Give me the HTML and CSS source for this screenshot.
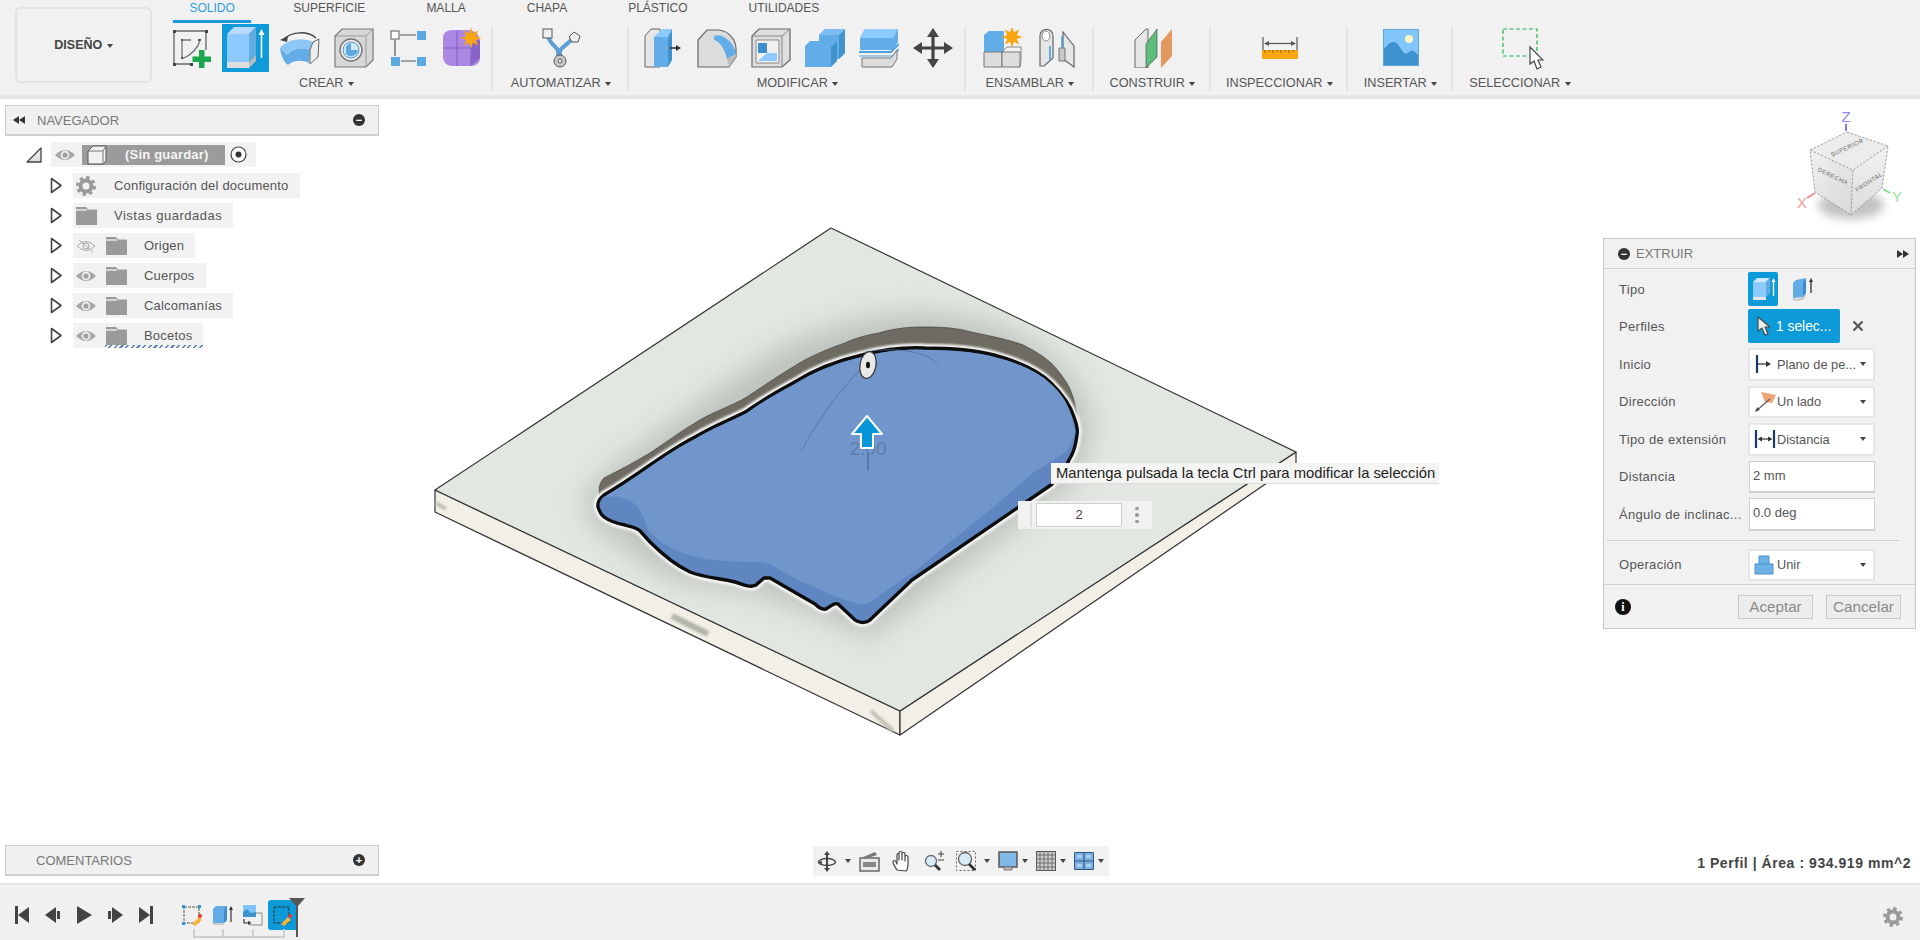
FILE: index.html
```html
<!DOCTYPE html>
<html lang="es">
<head>
<meta charset="utf-8">
<title>Diseño - Extruir</title>
<link rel="stylesheet" href="styles.css">
</head>
<body>
<svg class="defs" width="0" height="0" aria-hidden="true">
  <defs>
    <polygon id="star" fill="#f8a50f" points="0,-11 2,-5 7.8,-7.8 5,-2 11,0 5,2 7.8,7.8 2,5 0,11 -2,5 -7.8,7.8 -5,2 -11,0 -5,-2 -7.8,-7.8 -2,-5"/>
    <g id="eye"><path d="M0 7Q10-3 20 7Q10 17 0 7z" fill="#a6a6a6"/><circle cx="10" cy="7" r="4.4" fill="#eee"/><circle cx="10" cy="7" r="2.6" fill="#a0a0a0"/></g>
    <g id="folder"><path d="M0 1h10l2 2.6h9V19H0z" fill="#9a9a9a"/><path d="M0 4h11" stroke="#eee" stroke-width="1.4"/></g>
    <path id="tree-arrow" d="M1.500 1.500L11 8.500L1.500 15.500z" fill="#fff" stroke="#444" stroke-width="1.600" stroke-linejoin="round"/>
    <path id="blob" d="M598 507C597 501 600 498 604 495C640 474 665 452 695 437C715 425 730 420 747 411C765 398 780 390 793 383C815 369 840 360 862 355C885 349 905 347 925 348C950 348 975 350 994 355C1020 362 1040 372 1051 383C1063 395 1071 407 1074 417C1077 425 1078 430 1077 435C1075 450 1072 455 1069 460C1065 470 1058 478 1051 485L912 580L872 618C868 623 860 624 855 620L838 604C834 602 830 607 826 609C822 610 818 607 815 604L770 578L764 578L756 585C750 588 745 585 735 582C720 578 705 578 690 572C675 565 660 552 650 542L641 532C637 527 630 527 625 525C615 523 608 520 604 517C600 514 599 510 598 507z"/>
    <filter id="b1" x="-30%" y="-30%" width="160%" height="160%"><feGaussianBlur stdDeviation="1"/></filter>
    <filter id="b12" x="-30%" y="-30%" width="160%" height="160%"><feGaussianBlur stdDeviation="14"/></filter>
    <filter id="b3" x="-50%" y="-50%" width="200%" height="200%"><feGaussianBlur stdDeviation="5"/></filter>
    <linearGradient id="cubeL" x1="0" y1="0" x2="1" y2="1"><stop offset="0" stop-color="#f1f1f1"/><stop offset="1" stop-color="#d8d8d8"/></linearGradient>
    <linearGradient id="cubeR" x1="0" y1="0" x2="0" y2="1"><stop offset="0" stop-color="#f2f2f2"/><stop offset="1" stop-color="#dcdcdc"/></linearGradient>
  </defs>
</svg>

<header class="ribbon">
  <button class="design" type="button">DISEÑO <i class="caret"></i></button>
  <div class="ribbon-main">
    <nav class="tabs">
      <span class="tab active">SOLIDO</span>
      <span class="tab">SUPERFICIE</span>
      <span class="tab">MALLA</span>
      <span class="tab">CHAPA</span>
      <span class="tab">PLÁSTICO</span>
      <span class="tab">UTILIDADES</span>
    </nav>
    <div class="tools">
      <section class="group g-crear">
        <div class="btns">
          <span class="tool"><svg width="40" height="40" viewBox="0 0 40 40"><path d="M2 3h32M2 3v33M34 3v19M2 36h17" fill="none" stroke="#666" stroke-width="1.300"/><path d="M1 2h3v3H1zM33 2h3v3h-3zM1 35h3v3H1zM18 35h3v3h-3z" fill="#444"/><path d="M10 12v18M10 12h9M10 31C19 27 26 21 28 12" fill="none" stroke="#777" stroke-width="1.300"/><path d="M9 11h2v2H9zM26 11h3v2h-3zM9 29h2v2H9z" fill="#555"/><path d="M27 22h5.500v6.500H39V34h-6.500v6H27v-6h-6.500v-5.500H27z" fill="#1aa64b"/></svg></span>
          <span class="tool"><span class="tool-sel"><svg width="47" height="48" viewBox="0 0 47 48"><path d="M5 10l7-7h22l-7 7z" fill="#b7dcff"/><path d="M5 10h22v28H5z" fill="#8ccaff"/><path d="M27 10l7-7v28l-7 7z" fill="#62addf"/><path d="M5 38h22v6H5z" fill="#ddd"/><path d="M27 38l7-7v6l-7 7z" fill="#b9b9b9"/><path d="M39.500 34V9" stroke="#fff" stroke-width="1.600"/><path d="M36.500 11l3-6 3 6z" fill="#fff"/></svg></span></span>
          <span class="tool"><svg width="42" height="36" viewBox="0 0 42 36"><path d="M5 9C13 1 29 1 37 8" fill="none" stroke="#444" stroke-width="1.500"/><path d="M1 10l8-4-1 6z" fill="#444"/><path d="M1 18C8 9 24 7 34 12L31 20C23 17 13 19 8 25z" fill="#8cc7f5"/><path d="M1 18L8 25C13 19 23 17 31 20L30 33C22 29 13 31 9 35C5 32 2 26 1 18z" fill="#62ade8"/><path d="M31 20L34 12L40 9L39 27L31 34z" fill="#eee" stroke="#666"/></svg></span>
          <span class="tool"><svg width="40" height="40" viewBox="0 0 40 40"><path d="M1 8l7-7h31v31l-7 7H1z" fill="#d8d8d8" stroke="#777" stroke-width="1.200"/><path d="M1 8h31v31M32 8l7-7" fill="none" stroke="#999"/><circle cx="17" cy="22" r="11" fill="#eee" stroke="#777" stroke-width="1.400"/><circle cx="17" cy="22" r="8" fill="#cfe6f7" stroke="#5b93c4"/><path d="M12 19a7 7 0 0 1 5-4v7h7a7 7 0 0 1-12 4z" fill="#5ca8df"/></svg></span>
          <span class="tool"><svg width="36" height="36" viewBox="0 0 36 36"><rect x="1" y="1" width="8" height="8" fill="#fff" stroke="#555"/><path d="M27 1h9v9h-9zM1 27h9v9H1zM27 27h9v9h-9z" fill="#5ba8e3"/><path d="M10 5h16M5 10v16M11 31h15" stroke="#555" stroke-width="1.200"/></svg></span>
          <span class="tool"><svg width="40" height="40" viewBox="0 0 40 40"><path d="M1 10C1 5 5 2 10 2h16c7 0 12 5 12 12v16c0 5-4 8-9 8H10c-5 0-9-4-9-9z" fill="#ac88e4"/><path d="M1 20h28M15 3v35M29 12v26" stroke="#8560c8" stroke-width="1.100" fill="none"/><path d="M29 14l9-2v18l-9 8z" fill="#8a63c9"/><use href="#star" transform="translate(29 10) scale(.95)"/></svg></span>
        </div>
        <div class="glabel">CREAR <i class="caret"></i></div>
      </section>
      <section class="group g-auto">
        <div class="btns">
          <span class="tool"><svg width="42" height="40" viewBox="0 0 42 40"><path d="M8 8C10 16 16 18 19 24c3-6 10-8 15-15" fill="none" stroke="#5b9fd4" stroke-width="4"/><path d="M19 30V22" stroke="#5b9fd4" stroke-width="6"/><rect x="3" y="1" width="9" height="9" fill="#eee" stroke="#555"/><path d="M34 4l6 4-2 6h-6l-3-5z" fill="#eee" stroke="#555"/><circle cx="20" cy="33" r="6" fill="#c8c8c8" stroke="#555"/><circle cx="20" cy="33" r="2" fill="#eee" stroke="#555"/></svg></span>
        </div>
        <div class="glabel">AUTOMATIZAR <i class="caret"></i></div>
      </section>
      <section class="group g-mod">
        <div class="btns">
          <span class="tool"><svg width="38" height="40" viewBox="0 0 38 40"><path d="M1 8l6-7h9v38H1z" fill="#e6e6e6" stroke="#666"/><path d="M10 9h14v30H10z" fill="#62ade8"/><path d="M10 9l8-8h10l-4 8z" fill="#8ccaff"/><path d="M24 9l4-8v31l-4 7z" fill="#4193cd"/><path d="M26 20h7" stroke="#333" stroke-width="1.600"/><path d="M32 17l5 3-5 3z" fill="#333"/></svg></span>
          <span class="tool"><svg width="40" height="40" viewBox="0 0 40 40"><path d="M1 39V12L10 2h12c9 1 17 9 17 19v8l-7 10z" fill="#dcdcdc" stroke="#666" stroke-width="1.200"/><path d="M17 8c7-3 20 5 22 18l-9 5C28 22 24 14 17 12z" fill="#62ade8"/><path d="M30 31l9-5v3l-7 10z" fill="#bcbcbc"/></svg></span>
          <span class="tool"><svg width="40" height="40" viewBox="0 0 40 40"><path d="M1 8l7-7h31v31l-8 7H1z" fill="#dedede" stroke="#666" stroke-width="1.200"/><path d="M1 8h30v31M31 8l8-7" stroke="#888" fill="none"/><path d="M5 12h23v23H5z" fill="#f0f0f0" stroke="#888"/><path d="M7 15h9v10H7z" fill="#3e8fc9"/><path d="M16 25h10v8H7z" fill="#8ccaff"/></svg></span>
          <span class="tool"><svg width="40" height="40" viewBox="0 0 40 40"><path d="M14 7l6-6h20v24l-6 6h-8v8H0V18l5-5h9z" fill="#62ade8"/><path d="M34 7v24l6-6V1zM26 19v20l6-6V13z" fill="#4193cd"/><path d="M14 7l6-6h20l-6 6z" fill="#7dbdf2"/></svg></span>
          <span class="tool"><svg width="40" height="40" viewBox="0 0 40 40"><path d="M1 10l5-9h33v13l-5 8H1z" fill="#62ade8"/><path d="M1 10L6 1h33l-5 9z" fill="#8ccaff"/><path d="M0 24h32l8-8" fill="none" stroke="#4ca2e0" stroke-width="1.800"/><path d="M0 28h34l6-7" fill="none" stroke="#4ca2e0" stroke-width="1.200"/><path d="M3 30v9h30l5-8V22l-6 8z" fill="#dcdcdc" stroke="#777"/></svg></span>
          <span class="tool"><svg width="40" height="40" viewBox="0 0 40 40"><path d="M20 4v32M4 20h32" stroke="#444" stroke-width="3.200"/><path d="M20 0l6 9H14zM20 40l-6-9h12zM0 20l9-6v12zM40 20l-9 6V14z" fill="#444"/></svg></span>
        </div>
        <div class="glabel">MODIFICAR <i class="caret"></i></div>
      </section>
      <section class="group g-ens">
        <div class="btns">
          <span class="tool"><svg width="40" height="40" viewBox="0 0 40 40"><path d="M1 7l5-4h15v21H1z" fill="#62ade8"/><path d="M1 24h18v15H1z" fill="#ddd" stroke="#777"/><path d="M19 24h18v15H19z" fill="#ddd" stroke="#777"/><path d="M19 24l5-5h14v14l-1 6" fill="none" stroke="#888"/><use href="#star" transform="translate(29 9) scale(.95)"/></svg></span>
          <span class="tool"><svg width="36" height="40" viewBox="0 0 36 40"><path d="M1 8c0-9 13-9 13 0v22l-9 8H1z" fill="#e6e6e6" stroke="#666" stroke-width="1.200"/><path d="M24 4l11 14v21l-11-8z" fill="#e6e6e6" stroke="#666" stroke-width="1.200"/><ellipse cx="7" cy="8" rx="4" ry="5" fill="#fff" stroke="#888"/><path d="M20 20h6v13h-6z" fill="#c8c8c8" stroke="#777"/><path d="M11 18v15M23 8v12" stroke="#45a0e0" stroke-width="1.600"/></svg></span>
        </div>
        <div class="glabel">ENSAMBLAR <i class="caret"></i></div>
      </section>
      <section class="group g-con">
        <div class="btns">
          <span class="tool"><svg width="38" height="40" viewBox="0 0 38 40"><path d="M1 12L12 1h2v39H1z" fill="#e6e6e6" stroke="#666"/><path d="M12 40V16L23 1v28z" fill="#5dbd7b" stroke="#444" stroke-width=".6"/><path d="M27 40V14L38 1v27z" fill="#e3985f"/></svg></span>
        </div>
        <div class="glabel">CONSTRUIR <i class="caret"></i></div>
      </section>
      <section class="group g-ins">
        <div class="btns">
          <span class="tool"><svg width="36" height="22" viewBox="0 0 36 22"><path d="M1 0v13M35 0v13" stroke="#555" stroke-width="1.200"/><path d="M4 6.500h28" stroke="#555" stroke-width="1.200"/><path d="M2 6.500L7 4v5zM34 6.500L29 4v5z" fill="#555"/><path d="M0 13h36v9H0z" fill="#f7a70f"/><path d="M3 13v3M7 13v2M11 13v3M15 13v2M19 13v3M23 13v2M27 13v3M31 13v2" stroke="#8a5a00"/></svg></span>
        </div>
        <div class="glabel">INSPECCIONAR <i class="caret"></i></div>
      </section>
      <section class="group g-ima">
        <div class="btns">
          <span class="tool"><svg width="36" height="38" viewBox="0 0 36 38"><rect width="36" height="37" fill="#82c5fb"/><circle cx="26" cy="10" r="4" fill="#fdf7c4"/><path d="M0 37V21c3-3 6-8 10-8s7 5 10 10c2 2 4 2 6 0s4-2 6 0l4 4v10z" fill="#3e93cf"/><rect x=".5" y=".5" width="35" height="36" fill="none" stroke="#5aa7de"/></svg></span>
        </div>
        <div class="glabel">INSERTAR <i class="caret"></i></div>
      </section>
      <section class="group g-sel">
        <div class="btns">
          <span class="tool tool-high"><svg width="42" height="42" viewBox="0 0 42 42"><rect x="1" y="1" width="34" height="27" fill="none" stroke="#1fb455" stroke-width="1.200" stroke-dasharray="4 2.500"/><path d="M28 19v17l4-3 3 8 4-2-3-7h5z" fill="#fff" stroke="#444" stroke-width="1.200"/></svg></span>
        </div>
        <div class="glabel">SELECCIONAR <i class="caret"></i></div>
      </section>
    </div>
  </div>
</header>

<main class="viewport">
  <svg class="scene" width="1920" height="784" viewBox="0 99 1920 784">
    <defs><clipPath id="plateClip"><path d="M831 228L435 492L900 711L1296 452z"/></clipPath></defs>
    <path d="M435 490v22L900 735V711z" fill="#f1efe6" stroke="#333" stroke-width="1.200" stroke-linejoin="round"/>
    <path d="M900 711v24L1296 463V452z" fill="#f1efe6" stroke="#333" stroke-width="1.200" stroke-linejoin="round"/>
    <path d="M831 228L435 490L900 711L1296 452z" fill="#e3e7e2" stroke="#333" stroke-width="1.200" stroke-linejoin="round"/>
    <path d="M672 616L708 634" stroke="#b4b4aa" stroke-width="6" filter="url(#b1)"/>
    <path d="M436 503l10 6M871 711l22 20" stroke="#c0c0b6" stroke-width="4" filter="url(#b1)"/>
    <g clip-path="url(#plateClip)"><path d="M599 498C640 460 700 420 747 386C790 352 860 326 925 327C1000 330 1060 365 1077 417C1080 450 1060 480 1051 483L868 622L830 605L764 580L678 567L604 517z" fill="#a9aea8" stroke="#a9aea8" stroke-width="26" opacity=".65" filter="url(#b12)"/></g>

    <path d="M600 497C598 488 600 482 604 478C620 470 635 462 650 453C665 443 680 432 695 423C712 412 730 407 747 397C762 387 778 376 793 367C810 356 828 349 845 343C858 337 868 335 879 333C895 328 910 327 925 327C942 327 957 328 971 332C990 336 1010 340 1023 345C1035 351 1043 356 1051 363C1058 370 1064 378 1069 387C1074 398 1076 408 1077 417L1077 435L1000 400L800 400L620 500z" fill="#6e6b62" stroke="#4a4842" stroke-width=".8"/>
    <use href="#blob" fill="none" stroke="#f7f7f5" stroke-width="8.500" stroke-linejoin="round" filter="url(#b1)"/>
    <use href="#blob" fill="#5f86c0" stroke="#0d0d0d" stroke-width="3.400" stroke-linejoin="round"/>
    <path d="M600 500C605 496 615 495 628 500C641 505 644 520 648 530C660 545 680 553 700 558C720 562 745 562 764 562C775 565 790 578 810 585C825 592 845 602 862 604C872 604 878 596 890 588C910 575 930 560 950 542C965 530 975 522 990 510C1005 497 1020 484 1033 473C1045 465 1058 458 1067 450C1071 444 1074 438 1075.500 432C1071 407 1063 395 1051 384C1040 373 1020 363 994 357C975 352 950 350 925 350C905 349 885 351 862 357C840 362 815 371 793 385C780 392 765 400 747 413C730 422 715 427 695 439C665 454 640 476 604 497z" fill="#7096cb"/>
    <path d="M862 368C835 395 815 425 802 450M865 352C885 348 920 348 937 363" fill="none" stroke="#4a6a9a" stroke-width=".9" opacity=".8"/>
    <ellipse cx="868" cy="365" rx="8" ry="13.500" transform="rotate(10 868 365)" fill="#e8e8e4" stroke="#333" stroke-width="1.200"/>
    <ellipse cx="868" cy="365" rx="2" ry="3.200" fill="#111"/>
    <text x="868" y="455" class="scene-dim">2.00</text>
    <path d="M868 453v18" stroke="#4a6a9a" stroke-width="1.200"/>
    <path d="M867 416L882 434H873V448H861V434H852z" fill="#0696d7" stroke="#fff" stroke-width="2" stroke-linejoin="round"/>

    <g class="viewcube">
      <ellipse cx="1851" cy="205" rx="33" ry="14" fill="#9a9a9a" opacity=".6" filter="url(#b3)"/>
      <path d="M1847 132L1888 146L1853 170L1810 150z" fill="#ececec"/>
      <path d="M1810 150L1853 170L1851 215L1815 192z" fill="url(#cubeL)"/>
      <path d="M1853 170L1888 146L1882 188L1851 215z" fill="url(#cubeR)"/>
      <path d="M1847 132L1888 146L1882 188L1851 215L1815 192L1810 150zM1810 150L1853 170L1888 146M1853 170L1851 215" fill="none" stroke="#8a8a8a" stroke-width=".8" stroke-dasharray="2.500 1.500"/>
      <text class="cube-label" transform="translate(1832 157) rotate(-25)">SUPERIOR</text>
      <text class="cube-label" transform="translate(1817 171) rotate(25)">DERECHA</text>
      <text class="cube-label" transform="translate(1857 192) rotate(-33)">FRONTAL</text>
      <path d="M1846 131v-7" stroke="#7c7cf5" stroke-width="2"/>
      <text class="axis axis-z" x="1846" y="122">Z</text>
      <path d="M1815 193l-8 5" stroke="#f08a8a" stroke-width="2"/>
      <text class="axis axis-x" x="1802" y="208">X</text>
      <path d="M1883 189l7 4" stroke="#86e08c" stroke-width="2"/>
      <text class="axis axis-y" x="1897" y="202">Y</text>
    </g>
  </svg>

  <aside class="navigator">
    <div class="side-head">
      <svg class="rewind" width="12" height="8" viewBox="0 0 12 8"><path d="M6 0v8L0 4zM12 0v8L6 4z" fill="#333"/></svg>
      <span class="side-title">NAVEGADOR</span>
      <span class="round-btn">−</span>
    </div>
    <ul class="tree">
      <li class="tree-root">
        <svg width="16" height="16" viewBox="0 0 16 16"><path d="M15 1v14H1z" fill="url(#cubeR)" stroke="#444" stroke-width="1.300" stroke-linejoin="round"/></svg>
        <div class="node node-root">
          <svg width="20" height="14" viewBox="0 0 20 14"><use href="#eye"/></svg>
          <div class="root-bar">
            <svg width="20" height="20" viewBox="0 0 20 20"><path d="M1 6l5-5h13v15l-3 3H1z" fill="#f2f2f2" stroke="#555"/><path d="M1 6h15v13M16 6l3-5" fill="none" stroke="#777"/></svg>
            <span class="root-name">(Sin guardar)</span>
          </div>
          <svg width="17" height="17" viewBox="0 0 17 17"><circle cx="8.500" cy="8.500" r="7.500" fill="#fff" stroke="#444" stroke-width="1.200"/><circle cx="8.500" cy="8.500" r="3" fill="#333"/></svg>
        </div>
      </li>
      <li class="tree-row">
        <svg class="tw" width="13" height="17"><use href="#tree-arrow"/></svg>
        <div class="node n-wide">
          <svg class="ic-gear" width="20" height="20" viewBox="0 0 20 20"><circle cx="10" cy="10" r="5.500" fill="none" stroke="#9a9a9a" stroke-width="4"/><circle cx="10" cy="10" r="8.500" fill="none" stroke="#9a9a9a" stroke-width="3" stroke-dasharray="3.400 3.270"/></svg>
          <span class="node-text">Configuración del documento</span>
        </div>
      </li>
      <li class="tree-row">
        <svg class="tw" width="13" height="17"><use href="#tree-arrow"/></svg>
        <div class="node">
          <svg class="ic-folder-only" width="21" height="19" viewBox="0 0 21 19"><use href="#folder"/></svg>
          <span class="node-text text-wide">Vistas guardadas</span>
        </div>
      </li>
      <li class="tree-row">
        <svg class="tw" width="13" height="17"><use href="#tree-arrow"/></svg>
        <div class="node">
          <svg class="ic-eye" width="20" height="14" viewBox="0 0 20 14"><path d="M1 7Q10-2 19 7Q10 16 1 7z" fill="#f0f0f0" stroke="#aaa"/><circle cx="10" cy="7" r="3" fill="none" stroke="#aaa"/><path d="M3 1l14 12" stroke="#aaa"/></svg>
          <svg class="ic-folder" width="21" height="19" viewBox="0 0 21 19"><use href="#folder"/></svg>
          <span class="node-text">Origen</span>
        </div>
      </li>
      <li class="tree-row">
        <svg class="tw" width="13" height="17"><use href="#tree-arrow"/></svg>
        <div class="node">
          <svg class="ic-eye" width="20" height="14" viewBox="0 0 20 14"><use href="#eye"/></svg>
          <svg class="ic-folder" width="21" height="19" viewBox="0 0 21 19"><use href="#folder"/></svg>
          <span class="node-text">Cuerpos</span>
        </div>
      </li>
      <li class="tree-row">
        <svg class="tw" width="13" height="17"><use href="#tree-arrow"/></svg>
        <div class="node">
          <svg class="ic-eye" width="20" height="14" viewBox="0 0 20 14"><use href="#eye"/></svg>
          <svg class="ic-folder" width="21" height="19" viewBox="0 0 21 19"><use href="#folder"/></svg>
          <span class="node-text">Calcomanías</span>
        </div>
      </li>
      <li class="tree-row">
        <svg class="tw" width="13" height="17"><use href="#tree-arrow"/></svg>
        <div class="node node-wavy">
          <svg class="ic-eye" width="20" height="14" viewBox="0 0 20 14"><use href="#eye"/></svg>
          <svg class="ic-folder" width="21" height="19" viewBox="0 0 21 19"><use href="#folder"/></svg>
          <span class="node-text">Bocetos</span>
        </div>
      </li>
    </ul>
  </aside>

  <aside class="comments">
    <div class="side-head side-head-plain">
      <span class="side-title">COMENTARIOS</span>
      <span class="round-btn">+</span>
    </div>
  </aside>

  <div class="tooltip">Mantenga pulsada la tecla Ctrl para modificar la selección</div>

  <div class="value-box">
    <span class="grip"></span>
    <span class="value-input">2</span>
    <span class="kebab"><i></i><i></i><i></i></span>
  </div>

  <section class="extrude">
    <div class="ext-head">
      <span class="round-btn">−</span>
      <span class="side-title">EXTRUIR</span>
      <svg class="ffwd" width="12" height="8" viewBox="0 0 12 8"><path d="M0 0v8l6-4zM6 0v8l6-4z" fill="#333"/></svg>
    </div>
    <div class="ext-body">
      <div class="ext-row ext-row-tipo">
        <span class="ext-label">Tipo</span>
        <div class="type-btns">
          <span class="type-btn on"><svg width="26" height="28" viewBox="0 0 26 28"><path d="M3 7l4-4h13l-4 4z" fill="#cfe9ff"/><path d="M3 7h13v15H3z" fill="#8ccaff"/><path d="M16 7l4-4v15l-4 4z" fill="#62addf"/><path d="M3 22h13v3H3z" fill="#e6e6e6"/><path d="M23.500 21V6" stroke="#fff" stroke-width="1.400"/><path d="M21.500 7l2-4 2 4z" fill="#fff"/></svg></span>
          <span class="type-btn"><svg width="22" height="24" viewBox="0 0 22 24"><path d="M1 6l3-3 10-2v15l-3 4-10 1z" fill="#62ade8"/><path d="M11 5l3-4v15l-3 4z" fill="#3e8fc9"/><path d="M1 21l4 1 6-2 3-4-1 5-3 2-5 1-4-1z" fill="#c8c8c8"/><path d="M19 16V3" stroke="#333" stroke-width="1.300"/><path d="M17 5l2-4 2 4z" fill="#333"/></svg></span>
        </div>
      </div>
      <div class="ext-row ext-row-perf">
        <span class="ext-label">Perfiles</span>
        <div class="select-btn">
          <svg width="14" height="22" viewBox="0 0 14 22"><path d="M2 2v14l4-3 3 7 3-1-3-7h5z" fill="#eee" stroke="#444" stroke-width="1.100"/></svg>
          <span>1 selec...</span>
        </div>
        <svg class="clear" width="12" height="12" viewBox="0 0 12 12"><path d="M1.500 1.500l9 9M10.500 1.500l-9 9" stroke="#555" stroke-width="2.200"/></svg>
      </div>
      <div class="ext-row">
        <span class="ext-label">Inicio</span>
        <div class="dropdown">
          <span class="dd-ic"><svg width="20" height="20" viewBox="0 0 20 20"><path d="M3 1v18" stroke="#183a68" stroke-width="2.200"/><path d="M4 10h9" stroke="#333" stroke-width="1.300"/><path d="M12 7l5 3-5 3z" fill="#333"/></svg></span>
          <span class="dd-text">Plano de pe...</span><i class="caret"></i>
        </div>
      </div>
      <div class="ext-row">
        <span class="ext-label">Dirección</span>
        <div class="dropdown">
          <span class="dd-ic"><svg width="22" height="22" viewBox="0 0 22 22"><path d="M7 1l15 3-4 8-7-1z" fill="#eea677"/><path d="M2 20L16 8" stroke="#666" stroke-width="1.400"/><path d="M1 21l2-5 3 3z" fill="#555"/></svg></span>
          <span class="dd-text">Un lado</span><i class="caret"></i>
        </div>
      </div>
      <div class="ext-row">
        <span class="ext-label">Tipo de extensión</span>
        <div class="dropdown">
          <span class="dd-ic"><svg width="22" height="20" viewBox="0 0 22 20"><path d="M2 1v18M20 1v18" stroke="#183a68" stroke-width="2.200"/><path d="M5 10h12" stroke="#333" stroke-width="1.200"/><path d="M3.500 10L8 7.500v5zM18.500 10L14 7.500v5z" fill="#333"/></svg></span>
          <span class="dd-text">Distancia</span><i class="caret"></i>
        </div>
      </div>
      <div class="ext-row">
        <span class="ext-label">Distancia</span>
        <div class="field">2 mm</div>
      </div>
      <div class="ext-row">
        <span class="ext-label">Ángulo de inclinac...</span>
        <div class="field">0.0 deg</div>
      </div>
      <hr class="ext-rule">
      <div class="ext-row ext-row-last">
        <span class="ext-label">Operación</span>
        <div class="dropdown">
          <span class="dd-ic"><svg width="20" height="20" viewBox="0 0 20 20"><path d="M5 1h10v9H5z" fill="#6cb1e6" stroke="#4b92c9"/><path d="M1 9h18v10H1z" fill="#6cb1e6" stroke="#4b92c9"/></svg></span>
          <span class="dd-text">Unir</span><i class="caret"></i>
        </div>
      </div>
    </div>
    <div class="ext-foot">
      <span class="info">i</span>
      <span class="btn btn-ok">Aceptar</span>
      <span class="btn">Cancelar</span>
    </div>
  </section>

  <div class="navbar">
    <span class="nb nb-gap"><svg width="20" height="22" viewBox="0 0 20 22"><path d="M10 1l3 4h-2v13h2l-3 4-3-4h2V5H7z" fill="#444"/><ellipse cx="10" cy="12" rx="8.500" ry="3.500" fill="none" stroke="#444" stroke-width="1.400"/><path d="M1 12l4-1v3z" fill="#444"/></svg><i class="caret"></i></span>
    <span class="nb"><svg width="21" height="21" viewBox="0 0 21 21"><rect x="1" y="7" width="19" height="13" fill="#e8e8e8" stroke="#555" stroke-width="1.300"/><rect x="4" y="11" width="13" height="5" fill="#888"/><path d="M2 7L16 1l2 3L9 7" fill="#777"/></svg></span>
    <span class="nb nb-solo"><svg width="20" height="22" viewBox="0 0 20 22"><path d="M5 20c-2-3-4-6-4-8s2-2 3 0l1 2V5c0-2 2-2 2 0v5V3c0-2 3-2 3 0v7V4c0-2 3-2 3 0v7V7c0-2 3-2 3 0v7c0 3-1 6-2 7z" fill="#fff" stroke="#444" stroke-width="1.200" stroke-linejoin="round"/></svg></span>
    <span class="nb nb-solo"><svg width="20" height="20" viewBox="0 0 20 20"><circle cx="7" cy="10" r="5.500" fill="#d8ecf7" stroke="#666" stroke-width="1.300"/><path d="M11 14l5 5" stroke="#333" stroke-width="2.800"/><path d="M14 3h6M17 0v6M14 9h6" stroke="#444" stroke-width="1.100"/></svg></span>
    <span class="nb nb-gap nb-solo"><svg width="20" height="20" viewBox="0 0 20 20"><rect x=".5" y=".5" width="19" height="19" fill="none" stroke="#666" stroke-dasharray="2 2"/><circle cx="9" cy="8" r="6.500" fill="#d8ecf7" stroke="#666" stroke-width="1.300"/><path d="M13 13l6 6" stroke="#333" stroke-width="2.800"/></svg><i class="caret"></i></span>
    <span class="nb"><svg width="20" height="21" viewBox="0 0 20 21"><rect x="1" y="1" width="18" height="15" fill="#82b8e8" stroke="#555" stroke-width="1.500"/><path d="M6 16h8v3H6z" fill="#bbb" stroke="#777"/></svg><i class="caret"></i></span>
    <span class="nb"><svg width="20" height="20" viewBox="0 0 20 20"><rect x=".5" y=".5" width="19" height="19" fill="#ccc" stroke="#555"/><path d="M4 0v20M8 0v20M12 0v20M16 0v20M0 4h20M0 8h20M0 12h20M0 16h20" stroke="#666" stroke-width=".9"/></svg><i class="caret"></i></span>
    <span class="nb"><svg width="20" height="18" viewBox="0 0 20 18"><path d="M.5.500h19v17H.5z" fill="#7bb0e2" stroke="#34557f"/><path d="M10 0v18M0 9h20" stroke="#34557f"/><path d="M3 3h5v3H3zM12 3h5v3h-5zM3 12h5v3H3zM12 12h5v3h-5z" fill="#a9cff0"/></svg><i class="caret"></i></span>
  </div>

  <div class="status">1 Perfil | Área : 934.919 mm^2</div>
</main>

<footer class="timeline">
  <div class="transport">
    <span class="tp"><svg width="16" height="18" viewBox="0 0 16 18"><path d="M2 0h3v18H2zM16 1v16L5 9z" fill="#444"/></svg></span>
    <span class="tp"><svg width="17" height="18" viewBox="0 0 17 18"><path d="M12 1v16L1 9zM13 5h3v8h-3z" fill="#444"/></svg></span>
    <span class="tp"><svg width="16" height="20" viewBox="0 0 16 20"><path d="M1 1v18l15-9z" fill="#444"/></svg></span>
    <span class="tp"><svg width="17" height="18" viewBox="0 0 17 18"><path d="M5 1v16l11-8zM1 5h3v8H1z" fill="#444"/></svg></span>
    <span class="tp"><svg width="16" height="18" viewBox="0 0 16 18"><path d="M0 1v16l11-8zM11 0h3v18h-3z" fill="#444"/></svg></span>
  </div>
  <div class="features">
    <span class="ft"><svg width="21" height="21" viewBox="0 0 21 21"><rect x="2" y="2" width="15" height="16" fill="none" stroke="#555" stroke-dasharray="3 1"/><path d="M0 0h3v3H0zM16 0h3v3h-3zM0 17h3v3H0z" fill="#2d97e0"/><path d="M10 19l7-7 3 3-7 6z" fill="#f5b63a"/><circle cx="18" cy="11" r="2" fill="#e33"/></svg></span>
    <span class="ft"><svg width="21" height="21" viewBox="0 0 21 21"><path d="M1 4l3-3h11v14l-3 3H1z" fill="#62ade8"/><path d="M12 4l3-3v14l-3 3z" fill="#3e8fc9"/><path d="M1 18h11v2H1z" fill="#ccc"/><path d="M19 17V4" stroke="#333" stroke-width="1.200"/><path d="M17 5l2-4 2 4z" fill="#333"/></svg></span>
    <span class="ft"><svg width="21" height="21" viewBox="0 0 21 21"><rect x="1" y="0" width="13" height="12" fill="#82c5fb"/><path d="M1 12V7l4-3 4 4 5-1v5z" fill="#3e93cf"/><path d="M14 8h6v12H8v-4" fill="none" stroke="#888"/><path d="M2 14v4h5" fill="none" stroke="#333" stroke-width="1.200"/><path d="M6 16l3 2-3 2z" fill="#333"/></svg></span>
    <span class="ft ft-on"><svg width="21" height="21" viewBox="0 0 21 21"><rect x="2" y="2" width="15" height="16" fill="none" stroke="#333" stroke-dasharray="3 1"/><path d="M9 19l7-7 3 3-7 6z" fill="#f5b63a"/><circle cx="18" cy="11" r="2" fill="#e33"/></svg></span>
    <svg class="ft-bracket" width="92" height="9" viewBox="0 0 92 9"><path d="M1 0v8h90V0M30 0v8M60 0v8" fill="none" stroke="#cfcfcf" stroke-width="2"/></svg>
    <svg class="ft-marker" width="16" height="39" viewBox="0 0 16 39"><path d="M0 0h16L9 8v31H7V8z" fill="#555"/></svg>
  </div>
  <svg class="foot-gear" width="20" height="20" viewBox="0 0 20 20"><circle cx="10" cy="10" r="5.500" fill="none" stroke="#9a9a9a" stroke-width="4"/><circle cx="10" cy="10" r="8.500" fill="none" stroke="#9a9a9a" stroke-width="3" stroke-dasharray="3.400 3.270"/></svg>
</footer>
</body>
</html>
```

FILE: styles.css
```css
* { box-sizing: border-box; }
html, body { margin: 0; padding: 0; height: 100%; }
body {
  display: flex;
  flex-direction: column;
  width: 1920px;
  height: 940px;
  overflow: hidden;
  background: #fff;
  font-family: "Liberation Sans", Arial, sans-serif;
  color: #555;
}
.defs { position: absolute; }
.caret {
  display: inline-block;
  width: 0;
  height: 0;
  border-left: 3.5px solid transparent;
  border-right: 3.5px solid transparent;
  border-top: 4.5px solid #444;
  vertical-align: middle;
  margin-left: 1px;
}

/* ribbon */
.ribbon {
  flex: none;
  display: flex;
  height: 99px;
  background: #f1f1f1;
  border-bottom: 4px solid #e7e7e7;
}
.design {
  flex: none;
  width: 137px;
  height: 76px;
  margin: 7px 6px 0 15px;
  background: #f1f1f1;
  border: 2px solid #e3e3e3;
  border-radius: 6px;
  font: bold 12.500px "Liberation Sans", Arial, sans-serif;
  color: #444;
}
.ribbon-main { display: flex; flex-direction: column; }
.tabs {
  display: flex;
  gap: 28px;
  height: 24px;
  padding-left: 15px;
}
.tab {
  height: 23px;
  padding: 1px 16.500px 0;
  font-size: 12px;
  line-height: 15px;
  color: #555;
  border-bottom: 3px solid transparent;
}
.tab.active { color: #2c9ddc; border-bottom-color: #1b97d8; margin-right: -2.500px; }
.tools { display: flex; }
.group {
  position: relative;
  display: flex;
  flex-direction: column;
  align-items: center;
  height: 67px;
}
.group::after {
  content: "";
  position: absolute;
  right: 0;
  top: 3px;
  bottom: 0;
  width: 2px;
  background: #e4e4e4;
}
.g-crear { width: 335px; padding: 0 2px 0 4px; }
.g-auto { width: 136px; }
.g-mod { width: 337px; }
.g-ens { width: 128px; }
.g-con { width: 117px; }
.g-ins { width: 137px; }
.g-ima { width: 105px; }
.g-sel { width: 134px; }
.g-sel::after { display: none; }
.btns { display: flex; height: 48px; }
.tool {
  display: flex;
  align-items: center;
  justify-content: center;
  width: 54px;
  height: 48px;
}
.tool-high { align-items: flex-start; padding-top: 4px; padding-left: 6px; }
.tool-sel { display: block; width: 47px; height: 48px; background: #0f9ad9; }
.tool-sel svg { display: block; }
.glabel {
  margin-top: 3px;
  font-size: 12.700px;
  line-height: 16px;
  color: #555;
  white-space: nowrap;
}

/* viewport */
.viewport { position: relative; flex: 1; min-height: 0; background: #fff; }
.scene { position: absolute; left: 0; top: 0; display: block; }
.scene-dim { font: 19px "Liberation Sans", Arial, sans-serif; fill: #54749f; text-anchor: middle; opacity: .75; }
.cube-label { font: 6px "Liberation Sans", Arial, sans-serif; fill: #666; letter-spacing: .5px; }
.axis { font: 15px "Liberation Sans", Arial, sans-serif; text-anchor: middle; }
.axis-z { fill: #8a8af7; }
.axis-x { fill: #f29a9a; }
.axis-y { fill: #96e59c; }

/* side panels */
.navigator { position: absolute; left: 5px; top: 6px; width: 374px; }
.comments { position: absolute; left: 5px; bottom: 7px; width: 374px; }
.side-head {
  display: flex;
  align-items: center;
  height: 31px;
  padding: 0 13px 0 7px;
  background: #f0f0f0;
  border: 1px solid #cfcfcf;
  border-bottom-width: 2px;
}
.side-head-plain { padding-left: 30px; }
.rewind { margin-right: 12px; }
.side-title { flex: 1; font-size: 13px; color: #777; }
.round-btn {
  display: flex;
  align-items: center;
  justify-content: center;
  width: 12px;
  height: 12px;
  border-radius: 50%;
  background: #333;
  color: #fff;
  font: bold 11px/12px "Liberation Sans", Arial, sans-serif;
}
.tree { list-style: none; margin: 6px 0 0; padding: 0; }
.tree-root, .tree-row { display: flex; align-items: center; height: 25px; }
.tree-root { padding-left: 21px; margin-bottom: 6px; }
.tree-row { margin-top: 5px; padding-left: 45px; }
.tree-root + .tree-row { margin-top: 0; }
.tree-root > svg { margin-right: 9px; }
.tw { flex: none; margin-right: 10px; }
.node {
  display: flex;
  align-items: center;
  height: 25px;
  padding: 0 11px 0 3px;
  background: #f2f2f2;
  font-size: 13px;
  letter-spacing: .2px;
  color: #555;
}
.node-root { padding: 0 5px 0 4px; gap: 0; width: 205px; }
.root-bar {
  display: flex;
  align-items: center;
  width: 143px;
  height: 20px;
  margin: 0 5px 0 7px;
  padding-left: 5px;
  background: #9b9b9b;
}
.root-name { margin-left: 18px; font-weight: bold; font-size: 13px; color: #f4f4f4; }
.ic-gear { margin-right: 18px; }
.ic-folder-only { margin-right: 17px; }
.text-wide { letter-spacing: .5px; }
.ic-eye { margin-right: 10px; }
.ic-folder { margin-right: 17px; }
.node-wavy { background-image: repeating-linear-gradient(135deg, #5f83b5 0 1.500px, transparent 1.500px 4px); background-size: 100% 3px; background-repeat: no-repeat; background-position: 32px 100%; background-color: #f2f2f2; }
.node-text { white-space: nowrap; }

/* overlays */
.tooltip {
  position: absolute;
  left: 1051px;
  top: 364px;
  height: 21px;
  padding: 0 4px 0 5px;
  background: #f4f4f2;
  border-bottom: 1px solid #ddd;
  font-size: 14.800px;
  line-height: 20px;
  color: #222;
  white-space: nowrap;
}
.value-box {
  position: absolute;
  left: 1018px;
  top: 402px;
  display: flex;
  align-items: center;
  width: 134px;
  height: 28px;
  background: #f1f1f1;
}
.grip { width: 14px; height: 24px; margin: 0 4px 0 0; border-right: 2px solid #ddd; }
.value-input {
  width: 86px;
  height: 24px;
  border: 1px solid #cfcfcf;
  background: #fff;
  text-align: center;
  font-size: 13px;
  line-height: 22px;
  color: #444;
}
.kebab { display: flex; flex-direction: column; gap: 3px; margin-left: 13px; }
.kebab i { width: 3.500px; height: 3.500px; border-radius: 50%; background: #999; }

/* extrude panel */
.extrude {
  position: absolute;
  left: 1603px;
  top: 139px;
  width: 313px;
  height: 391px;
  background: #f1f1f1;
  border: 1px solid #c8c8c8;
  font-size: 13px;
}
.ext-head {
  display: flex;
  align-items: center;
  height: 30px;
  padding: 0 6px 0 14px;
  border-bottom: 1px solid #cfcfcf;
}
.ext-head .side-title { margin-left: 6px; }
.ext-body { padding: 3px 0 0 15px; height: 315px; }
.ext-row {
  display: grid;
  grid-template-columns: 129px 127px auto;
  align-items: center;
  height: 32.500px;
  margin-bottom: 5px;
}
.ext-row-tipo { height: 34px; margin-bottom: 3px; }
.ext-row-perf { height: 34px; }
.ext-row-last { margin-bottom: 0; }
.ext-label { letter-spacing: .3px; color: #555; white-space: nowrap; }
.type-btns { display: flex; align-items: center; }
.type-btn { display: flex; align-items: center; justify-content: center; width: 30px; height: 34px; margin-right: 10px; }
.type-btn.on { background: #0d9ad9; border-radius: 2px; }
.select-btn {
  display: flex;
  align-items: center;
  gap: 6px;
  width: 92px;
  height: 34px;
  padding-left: 8px;
  background: #0d9ad9;
  color: #fff;
  font-size: 13.800px;
  border-radius: 2px;
  white-space: nowrap;
}
.clear { margin-left: -23px; }
.dropdown {
  display: flex;
  align-items: center;
  height: 32.500px;
  padding: 0 7px 0 4px;
  background: #fff;
  border: 2px solid #e6e6e6;
  border-radius: 2px;
  white-space: nowrap;
}
.dd-ic { display: flex; width: 23px; flex: none; }
.dd-text { flex: 1; font-size: 12.800px; color: #555; overflow: hidden; }
.field {
  height: 32.500px;
  margin-left: 1px;
  padding: 4px 3px;
  background: #fff;
  border: 1px solid #cfcfcf;
  border-bottom-width: 2px;
  color: #555;
  line-height: 20px;
}
.ext-rule { width: 292px; height: 1px; margin: 9px 0 8px -12px; border: 0; background: #cfcfcf; }
.ext-foot {
  display: flex;
  align-items: center;
  height: 44px;
  padding: 0 14px 0 11px;
  border-top: 1px solid #cfcfcf;
}
.info {
  display: flex;
  align-items: center;
  justify-content: center;
  width: 16px;
  height: 16px;
  margin-right: auto;
  border-radius: 50%;
  background: #111;
  color: #fff;
  font: bold 12px/16px "Liberation Serif", serif;
}
.btn {
  display: flex;
  align-items: center;
  justify-content: center;
  width: 75px;
  height: 24px;
  background: #ececec;
  border: 1px solid #c9c9c9;
  color: #8a8a8a;
  font-size: 15.200px;
}
.btn-ok { margin-right: 13px; }

/* navigation bar */
.navbar {
  position: absolute;
  left: 813px;
  bottom: 7px;
  display: flex;
  align-items: center;
  gap: 8px;
  width: 296px;
  height: 30px;
  padding-left: 4px;
  background: #f1f1f1;
}
.nb { display: flex; align-items: center; gap: 3px; }
.nb-gap { gap: 7px; }
.nb-solo { margin-left: 4px; }
.status {
  position: absolute;
  right: 9px;
  bottom: 12px;
  font-size: 14px;
  font-weight: bold;
  letter-spacing: .55px;
  color: #444;
}

/* timeline */
.timeline {
  position: relative;
  flex: none;
  display: flex;
  height: 57px;
  padding: 15px 17px 0 5px;
  background: #f0f0f0;
  border-top: 2px solid #e6e6e6;
}
.transport { display: flex; height: 30px; }
.tp { display: flex; align-items: center; justify-content: center; width: 31.500px; height: 30px; }
.features { position: relative; display: flex; height: 30px; margin-left: 15px; }
.ft { display: flex; align-items: center; justify-content: center; width: 30px; height: 30px; }
.ft-on { background: #0d9ad9; border-radius: 3px; }
.ft-bracket { position: absolute; left: 15px; top: 29px; }
.ft-marker { position: absolute; left: 111px; top: -2px; }
.foot-gear { margin: 7px 0 0 auto; }
```
